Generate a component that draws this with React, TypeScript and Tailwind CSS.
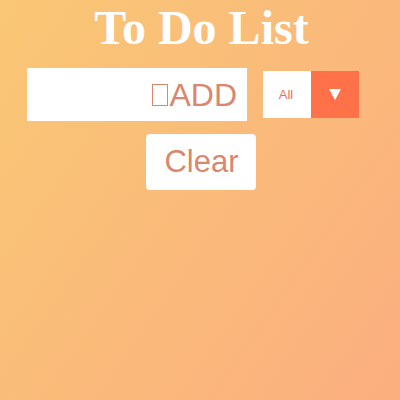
export default function App() {
  return (
    <div className="min-h-[400px] w-full bg-[linear-gradient(125deg,#f9c775,#fbae7f)] flex flex-col items-center font-['Liberation_Sans',Arial,sans-serif]">
      <h1 className="text-[48px] leading-[55px] font-bold text-white font-['Liberation_Serif','Times_New_Roman',serif] pl-[3px]">
        To Do List
      </h1>

      <div className="flex items-center mt-[13px] pl-[2px]">
        <div className="w-[220px] h-[53px] bg-white flex items-center justify-end pr-[10px]">
          <span className="inline-block w-[16px] h-[22px] border border-[#d9876e] mr-[1px] mt-[1px]"></span>
          <span className="text-[32px] leading-none text-[#d9876e]">ADD</span>
        </div>
        <div className="mx-4 flex h-[47px]">
          <div className="w-[48px] bg-white flex items-center justify-center text-[13px] text-[#f06b62] pr-[2px]">All</div>
          <div className="w-[48px] bg-[#ff7148] flex items-center justify-center">
            <svg width="12" height="11" viewBox="0 0 12 11">
              <path d="M0 0 H12 L6 11 Z" fill="#fff" />
            </svg>
          </div>
        </div>
      </div>

      <button className="mt-[13px] ml-[2px] w-[110px] h-[56px] bg-white rounded-[4px] text-[31px] text-[#d9876e] flex items-center justify-center pl-[1px]">
        Clear
      </button>
    </div>
  );
}
